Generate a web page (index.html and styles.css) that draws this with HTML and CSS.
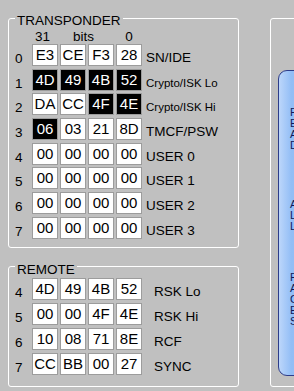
FILE: index.html
```html
<!DOCTYPE html>
<html lang="en">

<head>
    <meta charset="UTF-8">
    <meta name="viewport" content="width=device-width, initial-scale=1.0">
    <title>Transponder Editor</title>
    <link rel="stylesheet" href="styles.css">
</head>

<body>
    <div class="window">
        <div class="leftColumn">
            <fieldset class="group transponder">
                <legend>TRANSPONDER</legend>
                <div class="bitsHeader">
                    <span class="bitsHigh">31</span>
                    <span class="bitsLabel">bits</span>
                    <span class="bitsLow">0</span>
                </div>
                <div class="pageGrid">
                    <span class="rowNum">0</span>
                    <span class="cell">E3</span>
                    <span class="cell">CE</span>
                    <span class="cell">F3</span>
                    <span class="cell">28</span>
                    <span class="label">SN/IDE</span>

                    <span class="rowNum">1</span>
                    <span class="cell dark">4D</span>
                    <span class="cell dark">49</span>
                    <span class="cell dark">4B</span>
                    <span class="cell dark">52</span>
                    <span class="label small">Crypto/ISK Lo</span>

                    <span class="rowNum">2</span>
                    <span class="cell">DA</span>
                    <span class="cell">CC</span>
                    <span class="cell dark">4F</span>
                    <span class="cell dark">4E</span>
                    <span class="label small">Crypto/ISK Hi</span>

                    <span class="rowNum">3</span>
                    <span class="cell dark">06</span>
                    <span class="cell">03</span>
                    <span class="cell">21</span>
                    <span class="cell">8D</span>
                    <span class="label">TMCF/PSW</span>

                    <span class="rowNum">4</span>
                    <span class="cell">00</span>
                    <span class="cell">00</span>
                    <span class="cell">00</span>
                    <span class="cell">00</span>
                    <span class="label">USER 0</span>

                    <span class="rowNum">5</span>
                    <span class="cell">00</span>
                    <span class="cell">00</span>
                    <span class="cell">00</span>
                    <span class="cell">00</span>
                    <span class="label">USER 1</span>

                    <span class="rowNum">6</span>
                    <span class="cell">00</span>
                    <span class="cell">00</span>
                    <span class="cell">00</span>
                    <span class="cell">00</span>
                    <span class="label">USER 2</span>

                    <span class="rowNum">7</span>
                    <span class="cell">00</span>
                    <span class="cell">00</span>
                    <span class="cell">00</span>
                    <span class="cell">00</span>
                    <span class="label">USER 3</span>
                </div>
            </fieldset>

            <fieldset class="group remote">
                <legend>REMOTE</legend>
                <div class="pageGrid">
                    <span class="rowNum">4</span>
                    <span class="cell">4D</span>
                    <span class="cell">49</span>
                    <span class="cell">4B</span>
                    <span class="cell">52</span>
                    <span class="label">RSK Lo</span>

                    <span class="rowNum">5</span>
                    <span class="cell">00</span>
                    <span class="cell">00</span>
                    <span class="cell">4F</span>
                    <span class="cell">4E</span>
                    <span class="label">RSK Hi</span>

                    <span class="rowNum">6</span>
                    <span class="cell">10</span>
                    <span class="cell">08</span>
                    <span class="cell">71</span>
                    <span class="cell">8E</span>
                    <span class="label">RCF</span>

                    <span class="rowNum">7</span>
                    <span class="cell">CC</span>
                    <span class="cell">BB</span>
                    <span class="cell">00</span>
                    <span class="cell">27</span>
                    <span class="label">SYNC</span>
                </div>
            </fieldset>
        </div>

        <div class="sidePanel">
            <div class="infoBox">
                <p class="infoGroup first">Fetch<br>Erase<br>Auth<br>Dump</p>
                <p class="infoGroup">Auto<br>Load<br>Lock</p>
                <p class="infoGroup last">File<br>Apply<br>Copy<br>Export<br>Save</p>
            </div>
        </div>
    </div>
</body>

</html>
```

FILE: styles.css
```css
body {
    margin: 0;
    background-color: #c0c0c0;
    font-family: "Liberation Sans", Arial, sans-serif;
    color: #000;
    overflow: hidden;
}

.window {
    display: flex;
    align-items: flex-start;
    gap: 31px;
    padding: 7px 0 0 8px;
}

.leftColumn {
    display: flex;
    flex-direction: column;
    gap: 8px;
}

.group {
    box-sizing: border-box;
    width: 231px;
    margin: 0;
    padding: 0 6px 8px 6px;
    border: 1px solid #fff;
    border-radius: 3px;
    min-width: 0;
}

.group legend {
    font-size: 13.5px;
    line-height: 16px;
    padding: 6px 2px 0 2px;
}

.remote {
    padding-bottom: 11px;
}

.bitsHeader,
.pageGrid {
    display: grid;
    grid-template-columns: 15px repeat(4, 26px) auto;
    column-gap: 2px;
}

.bitsHeader {
    height: 15px;
    font-size: 13.5px;
    line-height: 15px;
}

.bitsHigh {
    grid-column: 2;
    padding-left: 3px;
}

.bitsLabel {
    grid-column: 3 / 5;
    padding-left: 13px;
}

.bitsLow {
    grid-column: 5;
    text-align: center;
}

.pageGrid {
    grid-auto-rows: 22px;
    row-gap: 2.7px;
}

.remote .pageGrid {
    row-gap: 3px;
}

.rowNum {
    align-self: end;
    font-size: 13.5px;
    line-height: 14px;
}

.cell {
    box-sizing: border-box;
    height: 22px;
    border: 1px solid #9c9c9c;
    background-color: #fff;
    font-size: 15px;
    line-height: 20px;
    text-align: center;
}

.cell.dark {
    background-color: #000;
    color: #fff;
}

.label {
    align-self: end;
    padding-left: 2px;
    font-size: 13.5px;
    line-height: 16px;
    white-space: nowrap;
}

.label.small {
    font-size: 11.5px;
}

.remote .label {
    padding-left: 10px;
}

.sidePanel {
    box-sizing: border-box;
    width: 120px;
    height: 369px;
    margin-top: 11px;
    padding-left: 7px;
    border: 1px solid #fff;
    border-radius: 3px;
}

.infoBox {
    box-sizing: border-box;
    width: 90px;
    height: 306px;
    margin-top: 51px;
    padding: 36px 0 0 11px;
    border: 1px solid #2e3d8a;
    border-radius: 9px;
    background: linear-gradient(to right, #bcd6fa, #93bef6 14%, #88b6f4);
    color: #0e1a5a;
    font-size: 11px;
    line-height: 11px;
}

.infoGroup {
    margin: 0;
}

.infoGroup + .infoGroup {
    margin-top: 48px;
}

.infoGroup.last {
    margin-top: 40px;
}
```
